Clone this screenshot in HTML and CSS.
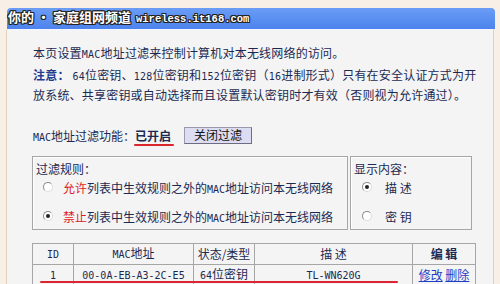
FILE: index.html
```html
<!DOCTYPE html>
<html lang="zh-CN">
<head>
  <meta charset="UTF-8">
  <meta name="viewport" content="width=device-width, initial-scale=1.0">
  <title>MAC地址过滤</title>
  <link rel="stylesheet" href="styles.css">
</head>
<body>
  <div class="banner"></div>
  <div class="watermark">你的<span class="dot">•</span>家庭组网频道 <span class="site">wireless.it168.com</span></div>

  <div class="panel">
    <p class="intro">本页设置<span class="en">MAC</span>地址过滤来控制计算机对本无线网络的访问。</p>
    <p class="note"><b>注意：</b> <span class="en">64</span>位密钥、<span class="en">128</span>位密钥和<span class="en">152</span>位密钥（<span class="en">16</span>进制形式）只有在安全认证方式为开<br>放系统、共享密钥或自动选择而且设置默认密钥时才有效（否则视为允许通过）。</p>

    <div class="status">
      <span><span class="en">MAC</span>地址过滤功能：</span>
      <span class="on">已开启</span>
      <button class="btn">关闭过滤</button>
    </div>

    <div class="filters">
      <div class="box rules">
        <div class="box-title">过滤规则：</div>
        <label class="opt"><span class="radio"></span><span><em>允许</em>列表中生效规则之外的<span class="en">MAC</span>地址访问本无线网络</span></label>
        <label class="opt"><span class="radio checked"></span><span><em>禁止</em>列表中生效规则之外的<span class="en">MAC</span>地址访问本无线网络</span></label>
      </div>
      <div class="box show">
        <div class="box-title">显示内容：</div>
        <label class="opt"><span class="radio checked"></span><span>描 述</span></label>
        <label class="opt"><span class="radio"></span><span>密 钥</span></label>
      </div>
    </div>

    <div class="table-wrap">
      <table class="list">
        <tr>
          <th class="c-id"><span class="en">ID</span></th>
          <th class="c-mac"><span class="en">MAC</span>地址</th>
          <th class="c-type">状态/类型</th>
          <th class="c-desc">描 述</th>
          <th class="c-edit"><b>编 辑</b></th>
        </tr>
        <tr>
          <td><span class="en">1</span></td>
          <td><span class="en">00-0A-EB-A3-2C-E5</span></td>
          <td><span class="en">64</span>位密钥</td>
          <td><span class="en">TL-WN620G</span></td>
          <td><a href="#">修改</a> <a href="#">删除</a></td>
        </tr>
      </table>
      <div class="mark"></div>
    </div>
  </div>
</body>
</html>
```

FILE: styles.css
```css
body {
  margin: 0;
  background: #f8f0e6;
  font-family: "Noto Sans CJK SC", sans-serif;
  font-size: 12px;
  color: #1c2a52;
  overflow: hidden;
}

.banner {
  height: 21px;
  margin: 8px 5px 0 7px;
  border-radius: 4px 4px 0 0;
  background: linear-gradient(#6b9df6, #4d83ec);
}

.watermark {
  position: absolute;
  top: 8px;
  left: 8px;
  color: #fff;
  font-size: 13px;
  font-weight: bold;
  line-height: 17px;
  white-space: nowrap;
  text-shadow: -1px -1px 0 #222, 1px -1px 0 #222, -1px 1px 0 #222, 1px 1px 0 #222,
               0 -1px 0 #222, 0 1px 0 #222, -1px 0 0 #222, 1px 0 0 #222;
}

.watermark .dot {
  margin: 0 3px;
}

.watermark .site {
  font-family: "Liberation Mono", monospace;
  font-size: 10.5px;
  margin-left: 2px;
}

.panel {
  margin: 0 6px 0 6px;
  height: 255px;
  padding: 14px 0 0 26px;
  border-left: 1px solid #e2d0b8;
  border-right: 1px solid #e2d0b8;
  border-top: 1px solid #f2f6ff;
  background: #f4f4f4;
}

.en {
  font-family: "DejaVu Sans Mono", monospace;
  font-size: 10px;
}

p {
  margin: 0;
  line-height: 18px;
  white-space: nowrap;
  letter-spacing: 0.2px;
}

.intro {
  margin-bottom: 2px;
}

.note b {
  color: #1f3c8f;
}

.status {
  display: flex;
  align-items: center;
  height: 20px;
  margin-top: 21px;
}

.on {
  position: relative;
  font-weight: bold;
  margin-right: 13px;
}

.on::after {
  content: "";
  position: absolute;
  left: -1px;
  right: -3px;
  bottom: -2px;
  height: 2px;
  border-radius: 1px;
  background: #d8262c;
}

.btn {
  width: 68px;
  height: 17px;
  padding: 0;
  font-family: inherit;
  font-size: 12px;
  line-height: 14px;
  color: #111;
  background: #dcdcf2;
  border: 1px solid #6e6e80;
  border-top-color: #9a9aae;
  border-left-color: #9a9aae;
}

.filters {
  display: flex;
  gap: 2px;
  margin: 11px 0 0 -1px;
}

.box {
  padding-top: 4px;
  border: 1px solid #a6a6a6;
  box-shadow: inset 1px 1px 0 #fff;
  box-sizing: border-box;
  height: 74px;
}

.rules {
  width: 316px;
  padding-left: 3px;
}

.show {
  width: 122px;
  padding-left: 3px;
}

.box-title {
  line-height: 16px;
}

.opt {
  display: flex;
  align-items: center;
  height: 20px;
  padding-left: 7px;
  gap: 10px;
  white-space: nowrap;
}

.opt + .opt {
  margin-top: 9px;
}

.show .opt {
  padding-left: 8px;
  gap: 13px;
}

.opt em {
  font-style: normal;
  color: #e01c1c;
}

.radio {
  width: 10px;
  height: 10px;
  border-radius: 50%;
  border: 1px solid #8a8a8a;
  border-right-color: #dcdcdc;
  border-bottom-color: #dcdcdc;
  background: #fff;
  box-sizing: border-box;
  position: relative;
}

.radio.checked::after {
  content: "";
  position: absolute;
  left: 2px;
  top: 2px;
  width: 4px;
  height: 4px;
  border-radius: 50%;
  background: #222;
}

.table-wrap {
  position: relative;
  margin: 13px 0 0 -1px;
  width: 440px;
}

.list {
  width: 439px;
  border-collapse: collapse;
  table-layout: fixed;
}

.list th,
.list td {
  height: 18px;
  padding: 0;
  border: 1px solid #a6a6a6;
  text-align: center;
  font-weight: normal;
  line-height: 18px;
  white-space: nowrap;
}

.list b {
  font-weight: bold;
}

.c-id { width: 40px; }
.c-mac { width: 119px; }
.c-type { width: 60px; }
.c-desc { width: 157px; }
.c-edit { width: 62px; }

.list a {
  color: #1d3fc6;
}

.mark {
  position: absolute;
  left: 8px;
  top: 38px;
  width: 358px;
  height: 2px;
  border-radius: 1px;
  background: #dc2530;
}
```
